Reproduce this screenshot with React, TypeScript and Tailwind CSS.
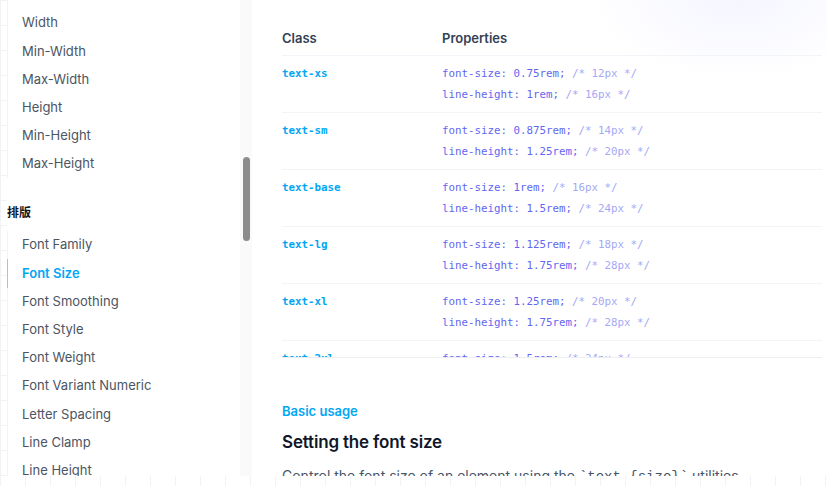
import React from 'react';

const layoutItems = ['Width', 'Min-Width', 'Max-Width', 'Height', 'Min-Height', 'Max-Height'];
const typographyItems = [
    'Font Family',
    'Font Size',
    'Font Smoothing',
    'Font Style',
    'Font Weight',
    'Font Variant Numeric',
    'Letter Spacing',
    'Line Clamp',
    'Line Height',
];

const rows = [
    { cls: 'text-xs', size: '0.75rem', sizePx: '12px', lh: '1rem', lhPx: '16px' },
    { cls: 'text-sm', size: '0.875rem', sizePx: '14px', lh: '1.25rem', lhPx: '20px' },
    { cls: 'text-base', size: '1rem', sizePx: '16px', lh: '1.5rem', lhPx: '24px' },
    { cls: 'text-lg', size: '1.125rem', sizePx: '18px', lh: '1.75rem', lhPx: '28px' },
    { cls: 'text-xl', size: '1.25rem', sizePx: '20px', lh: '1.75rem', lhPx: '28px' },
    { cls: 'text-2xl', size: '1.5rem', sizePx: '24px', lh: '2rem', lhPx: '32px' },
];

const NavItem: React.FC<{ label: string; active?: boolean }> = ({ label, active }) => (
    <li
        className={
            active
                ? 'h-[28.2px] flex items-center pl-[14px] -ml-px border-l border-[#7dd3fc] text-sky-500 font-semibold'
                : 'h-[28.2px] flex items-center pl-[14px] text-[#4b5563]'
        }
    >
        {label}
    </li>
);

export default function App() {
    return (
        <div
            className="relative h-[486px] w-[827px] overflow-hidden bg-white bg-[linear-gradient(to_right,#f1f2f4_1px,transparent_1px),linear-gradient(to_bottom,#f1f2f4_1px,transparent_1px)] bg-[size:25px_25px]"
            style={{ fontFamily: 'Inter, "Noto Sans CJK SC", sans-serif' }}
        >
            <div className="flex h-[476px]">
                {/* Sidebar */}
                <aside className="w-[240px] shrink-0 pl-[7px]">
                    <div className="h-full bg-white text-[13px] overflow-hidden">
                        <ul className="border-l border-gray-100 pt-[9px]">
                            {layoutItems.map(item => (
                                <NavItem key={item} label={item} />
                            ))}
                        </ul>
                        <h5 className="mt-[26px] mb-[9px] text-[12px] font-bold text-gray-900 leading-[18px]">排版</h5>
                        <ul className="border-l border-gray-100">
                            {typographyItems.map(item => (
                                <NavItem key={item} label={item} active={item === 'Font Size'} />
                            ))}
                        </ul>
                    </div>
                </aside>

                {/* Scrollbar */}
                <div className="w-[12px] shrink-0 bg-[#fafafa] pt-[157px] pl-[3px]">
                    <div className="w-[7px] h-[84px] rounded-full bg-[#8c8c8c]" />
                </div>

                {/* Content */}
                <main className="relative flex-1 bg-white pl-[30px] pr-[5px] overflow-hidden">
                    <div className="pointer-events-none absolute -top-[90px] -right-[60px] w-[300px] h-[170px] bg-[radial-gradient(closest-side,rgba(232,234,255,0.45),rgba(255,255,255,0))]" />

                    <div className="relative pt-[28px]">
                        <div className="h-[330px] overflow-hidden border-b border-slate-200/70">
                            <div className="flex text-[13px] font-semibold text-[#334155] leading-[20px] pb-[7px] border-b border-slate-100">
                                <div className="w-[160px]">Class</div>
                                <div>Properties</div>
                            </div>
                            {rows.map(row => (
                                <div
                                    key={row.cls}
                                    className="flex pt-[7px] pb-[7px] border-b border-gray-100 text-[10.8px] leading-[21px] font-medium"
                                    style={{ fontFamily: '"DejaVu Sans Mono", monospace' }}
                                >
                                    <div className="w-[160px] text-sky-500 font-semibold">{row.cls}</div>
                                    <div className="text-[#6366f1]">
                                        <div>
                                            font-size: {row.size}; <span className="text-[#a5a8f5]">/* {row.sizePx} */</span>
                                        </div>
                                        <div>
                                            line-height: {row.lh}; <span className="text-[#a5a8f5]">/* {row.lhPx} */</span>
                                        </div>
                                    </div>
                                </div>
                            ))}
                        </div>

                        <p className="mt-[44px] text-[13px] font-semibold text-sky-500 leading-[18px]">Basic usage</p>
                        <h2 className="mt-[10px] text-[17px] font-semibold text-[#0f172a] leading-[24px] tracking-[-0.01em]">
                            Setting the font size
                        </h2>
                        <p className="mt-[10px] text-[14px] text-[#475569] leading-[24px]">
                            Control the font size of an element using the <code className="font-mono">`text-{'{size}'}`</code> utilities.
                        </p>
                    </div>
                </main>
            </div>
        </div>
    );
}
